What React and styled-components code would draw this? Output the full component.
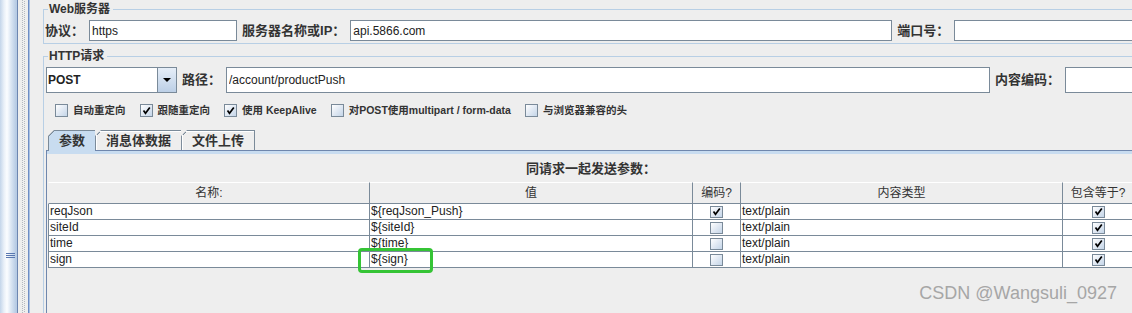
import React from 'react';
import styled, { createGlobalStyle } from 'styled-components';

const SANS = `"Liberation Sans", "Noto Sans CJK SC", Arial, sans-serif`;
const EDGE = '#7a8a99';
const FRAME_BLUE = '#b8cfe5';

const GlobalStyle = createGlobalStyle`
  html, body {
    margin: 0;
    padding: 0;
    background: #eeeeee;
  }

  * {
    box-sizing: border-box;
  }
`;

const Frame = styled.div`
  position: relative;
  display: flex;
  width: 1132px;
  height: 313px;
  overflow: hidden;
  background: #eeeeee;
  font-family: ${SANS};
  color: #333;
`;

const Splitter = styled.div`
  flex: none;
  width: 18px;
  display: flex;
  flex-direction: column;
  border-right: 1px solid #6d86b0;
  background: linear-gradient(to right, #c3d5ea 0, #e9f0f8 4px, #fbfdff 7px, #dbe6f3 11px, #b7cbe4 16px);
`;

const Grip = styled.div`
  margin: 253px 0 0 6px;
  width: 9px;
  height: 5px;
  background: repeating-linear-gradient(to bottom, #5a78b0 0 1px, transparent 1px 2px);
`;

const DotRail = styled.div`
  flex: none;
  width: 10px;
  background:
    repeating-linear-gradient(to bottom, #b4b9bf 0 1px, transparent 1px 2px) 4px 0 / 1px 100% no-repeat,
    repeating-linear-gradient(to bottom, transparent 0 1px, #b4b9bf 1px 2px) 6px 0 / 1px 100% no-repeat,
    #eeeeee;
`;

const EdgeLine = styled.div`
  flex: none;
  width: 2px;
  border-left: 1px solid #6d8cc4;
  background: #a9c1e2;
`;

const Content = styled.div`
  flex: none;
  width: 1106px;
  padding: 2px 0 0 13px;
`;

const Group = styled.fieldset`
  margin: ${(p) => p.$top || 0}px 0 0;
  padding: 0 0 2px 1px;
  min-width: 0;
  border: 1px solid ${FRAME_BLUE};
`;

const Legend = styled.legend`
  margin-left: 3px;
  padding: 0 3px 0 1px;
  font: bold 12px/14px ${SANS};
  color: #333;
`;

const Row = styled.div`
  display: flex;
  align-items: center;
  gap: 5px;
  margin-top: 4px;
  padding-left: ${(p) => p.$inset || 0}px;
`;

const Label = styled.span`
  flex: none;
  font: bold 13px/16px ${SANS};
  color: #333;
  white-space: nowrap;
`;

const Field = styled.input.attrs({ readOnly: true })`
  flex: ${(p) => (p.$w ? 'none' : '1 1 auto')};
  width: ${(p) => (p.$w ? `${p.$w}px` : 'auto')};
  min-width: 0;
  height: ${(p) => p.$h}px;
  margin: 0;
  padding: 0 2px;
  border: 1px solid ${EDGE};
  border-radius: 0;
  background: #fff;
  font: 12px ${SANS};
  color: #222;
  outline: none;
`;

const Combo = styled.div`
  flex: none;
  display: flex;
  width: 131px;
  height: 26px;
`;

const ComboValue = styled.div`
  flex: 1;
  padding-left: 1px;
  border: 1px solid ${EDGE};
  border-right: none;
  background: #fff;
  font: bold 12px/24px ${SANS};
  color: #222;
`;

const ComboButton = styled.div`
  flex: none;
  display: flex;
  align-items: center;
  justify-content: center;
  width: 20px;
  border: 1px solid ${EDGE};
  background: linear-gradient(to bottom, #e6eef8, #bccfe6);

  &::after {
    content: '';
    border-left: 4px solid transparent;
    border-right: 4px solid transparent;
    border-top: 4px solid #000;
  }
`;

const Options = styled.div`
  display: flex;
  align-items: center;
  gap: 14px;
  height: 13px;
  margin: 11px 0 0 10px;
`;

const Option = styled.span`
  display: flex;
  align-items: center;
  gap: 5px;
  font: bold 10.5px/13px ${SANS};
  color: #333;
  white-space: nowrap;
`;

const Box = styled.span`
  flex: none;
  display: inline-flex;
  align-items: center;
  justify-content: center;
  width: 13px;
  height: ${(p) => p.$h || 13}px;
  border: 1px solid ${EDGE};
  background: linear-gradient(135deg, #ffffff 0%, #e1e9f3 50%, #c4d5e8 100%);
`;

const TabRow = styled.div`
  display: flex;
  align-items: flex-end;
  height: 20px;
  margin: 13px 0 0 3px;
`;

const Tab = styled.div`
  position: relative;
  z-index: ${(p) => (p.$active ? 1 : 0)};
  height: ${(p) => (p.$active ? 21 : 20)}px;
  margin-bottom: ${(p) => (p.$active ? -1 : 0)}px;
  padding: 0 10px;
  border: 1px solid ${EDGE};
  border-bottom: none;
  border-right: ${(p) => (p.$last ? `1px solid ${EDGE}` : 'none')};
  background: linear-gradient(
      135deg,
      transparent 4.2px,
      ${EDGE} 4.2px,
      ${EDGE} 5.3px,
      ${(p) => (p.$active ? '#c8dcf0' : '#eeeeee')} 5.3px
    )
    border-box;
  box-shadow: ${(p) => (p.$active ? 'none' : 'inset 1px 1px 0 #ffffff')};
  clip-path: polygon(6px 0, 100% 0, 100% 100%, 0 100%, 0 6px);
  font: bold 13px/19px ${SANS};
  color: #333;
  white-space: nowrap;
`;

const Panel = styled.div`
  height: 200px;
  margin: 0 1px;
  padding-left: 1px;
  border-top: 1px solid #6f87ad;
  border-left: 1px solid #6f87ad;
  box-shadow: inset 0 3px 0 #c8dcf0;
`;

const PanelTitle = styled.div`
  height: 31px;
  padding-top: 5px;
  text-align: center;
  font: bold 13px/26px ${SANS};
  color: #333;
`;

const Grid = styled.div`
  display: grid;
  grid-template-columns: 322px 323px 48px 322px 70px;
`;

const HeadCell = styled.div`
  height: 22px;
  border-top: 1px solid #ffffff;
  border-bottom: 1px solid ${EDGE};
  border-left: 1px solid ${(p) => (p.$first ? '#eeeeee' : 'transparent')};
  border-right: ${(p) => (p.$last ? 'none' : `1px solid ${EDGE}`)};
  border-left-width: ${(p) => (p.$first ? 1 : 0)}px;
  text-align: center;
  font: 12px/20px ${SANS};
  color: #333;
  white-space: nowrap;
`;

const Cell = styled.div`
  position: relative;
  display: flex;
  align-items: center;
  justify-content: ${(p) => (p.$center ? 'center' : 'flex-start')};
  height: 16px;
  padding: 0 1px;
  border-bottom: 1px solid ${EDGE};
  border-left: ${(p) => (p.$first ? `1px solid ${EDGE}` : 'none')};
  border-right: ${(p) => (p.$last ? 'none' : `1px solid ${EDGE}`)};
  background: #fff;
  font: 12px/15px ${SANS};
  color: #222;
  white-space: nowrap;
`;

const Highlight = styled.span`
  position: absolute;
  left: -12px;
  top: -4px;
  width: 75px;
  height: 25px;
  border: 3px solid #35c435;
  border-radius: 4px;
  pointer-events: none;
`;

const Watermark = styled.div`
  position: absolute;
  right: 15px;
  bottom: 10px;
  font: 18px/20px ${SANS};
  color: #a6a6a6;
  white-space: nowrap;
  pointer-events: none;
`;

const Check = () => (
  <svg width="9" height="9" viewBox="0 0 9 9">
    <path d="M1.5 4.5 L3.5 7.3 L7.8 1.5" fill="none" stroke="#000" strokeWidth="1.7" />
  </svg>
);

const CheckBox = ({ checked, h }) => <Box $h={h}>{checked && <Check />}</Box>;

const options = [
  { label: '自动重定向', checked: false },
  { label: '跟随重定向', checked: true },
  { label: '使用 KeepAlive', checked: true },
  { label: '对POST使用multipart / form-data', checked: false },
  { label: '与浏览器兼容的头', checked: false },
];

const columns = ['名称:', '值', '编码?', '内容类型', '包含等于?'];

const params = [
  { name: 'reqJson', value: '${reqJson_Push}', encode: true, type: 'text/plain' },
  { name: 'siteId', value: '${siteId}', encode: false, type: 'text/plain' },
  { name: 'time', value: '${time}', encode: false, type: 'text/plain' },
  { name: 'sign', value: '${sign}', encode: false, type: 'text/plain', marked: true },
];

const App = () => (
  <>
    <GlobalStyle />
    <Frame>
      <Splitter>
        <Grip />
      </Splitter>
      <DotRail />
      <EdgeLine />
      <Content>
        <Group>
          <Legend>Web服务器</Legend>
          <Row>
            <Label>协议：</Label>
            <Field $w={148} $h={21} defaultValue="https" />
            <Label>服务器名称或IP：</Label>
            <Field $w={542} $h={21} defaultValue="api.5866.com" />
            <Label>端口号：</Label>
            <Field $h={21} defaultValue="" />
          </Row>
        </Group>

        <Group $top={5}>
          <Legend>HTTP请求</Legend>
          <Row $inset={1}>
            <Combo>
              <ComboValue>POST</ComboValue>
              <ComboButton />
            </Combo>
            <Label>路径：</Label>
            <Field $w={764} $h={26} defaultValue="/account/productPush" />
            <Label>内容编码：</Label>
            <Field $h={26} defaultValue="" />
          </Row>

          <Options>
            {options.map((o) => (
              <Option key={o.label}>
                <CheckBox checked={o.checked} />
                {o.label}
              </Option>
            ))}
          </Options>

          <TabRow>
            <Tab $active>参数</Tab>
            <Tab>消息体数据</Tab>
            <Tab $last>文件上传</Tab>
          </TabRow>

          <Panel>
            <PanelTitle>同请求一起发送参数：</PanelTitle>
            <Grid>
              {columns.map((c, i) => (
                <HeadCell key={c} $first={i === 0} $last={i === columns.length - 1}>
                  {c}
                </HeadCell>
              ))}
              {params.map((p) => (
                <React.Fragment key={p.name}>
                  <Cell $first>{p.name}</Cell>
                  <Cell>
                    {p.value}
                    {p.marked && <Highlight />}
                  </Cell>
                  <Cell $center>
                    <CheckBox checked={p.encode} h={12} />
                  </Cell>
                  <Cell>{p.type}</Cell>
                  <Cell $center $last>
                    <CheckBox checked h={12} />
                  </Cell>
                </React.Fragment>
              ))}
            </Grid>
          </Panel>
        </Group>
      </Content>
      <Watermark>CSDN @Wangsuli_0927</Watermark>
    </Frame>
  </>
);

export default App;
